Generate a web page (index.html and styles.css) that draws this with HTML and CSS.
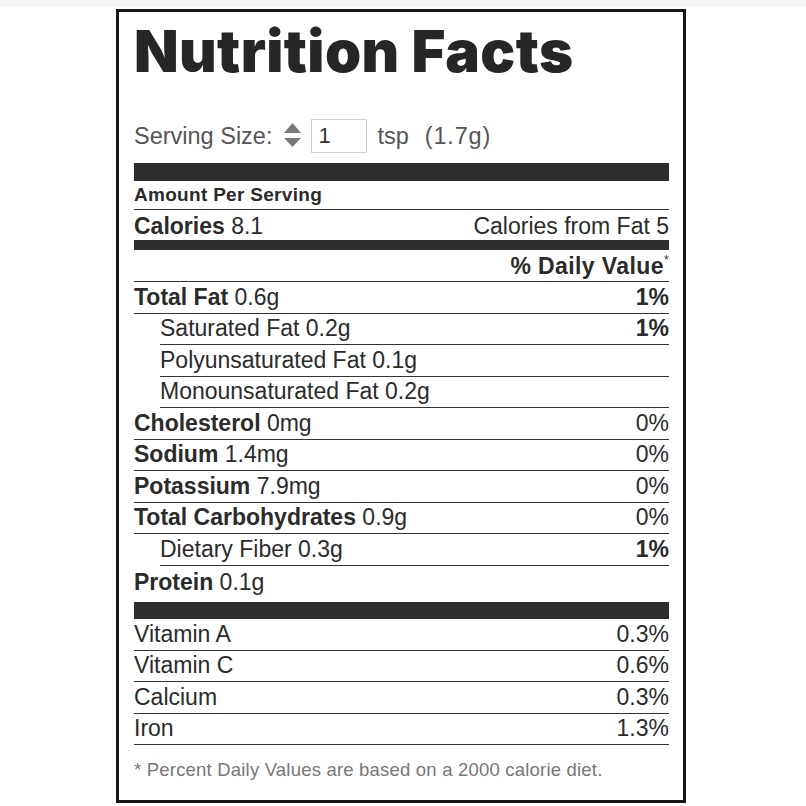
FILE: index.html
```html
<!DOCTYPE html>
<html>
<head>
<meta charset="utf-8">
<link rel="stylesheet" href="styles.css">
</head>
<body>
<div class="topstrip"></div>
<div class="label">
  <h1 class="title">Nutrition Facts</h1>
  <div class="serving">
    <span class="serving-label">Serving Size:</span>
    <svg class="spinner" width="17" height="26" viewBox="0 0 17 26"><polygon points="8.5,0 17,10 0,10" fill="#7a7a7a"/><polygon points="0,15 17,15 8.5,24" fill="#7a7a7a"/></svg>
    <span class="qty">1</span>
    <span class="unit">tsp</span>
    <span class="grams">(1.7g)</span>
  </div>
  <div class="bar bar-thick"></div>
  <div class="row amount"><b>Amount Per Serving</b></div>
  <div class="row cal"><span><b>Calories</b> 8.1</span><span>Calories from Fat 5</span></div>
  <div class="bar bar-mid"></div>
  <div class="row dv"><span></span><b>% Daily Value<sup>*</sup></b></div>
  <div class="row"><span><b>Total Fat</b> 0.6g</span><b>1%</b></div>
  <div class="row sub"><span>Saturated Fat 0.2g</span><b>1%</b></div>
  <div class="row sub"><span>Polyunsaturated Fat 0.1g</span></div>
  <div class="row sub"><span>Monounsaturated Fat 0.2g</span></div>
  <div class="row"><span><b>Cholesterol</b> 0mg</span><span>0%</span></div>
  <div class="row"><span><b>Sodium</b> 1.4mg</span><span>0%</span></div>
  <div class="row"><span><b>Potassium</b> 7.9mg</span><span>0%</span></div>
  <div class="row"><span><b>Total Carbohydrates</b> 0.9g</span><span>0%</span></div>
  <div class="row sub"><span>Dietary Fiber 0.3g</span><b>1%</b></div>
  <div class="row last"><span><b>Protein</b> 0.1g</span></div>
  <div class="bar bar-vit"></div>
  <div class="row"><span>Vitamin A</span><span>0.3%</span></div>
  <div class="row"><span>Vitamin C</span><span>0.6%</span></div>
  <div class="row"><span>Calcium</span><span>0.3%</span></div>
  <div class="row"><span>Iron</span><span>1.3%</span></div>
  <p class="foot">* Percent Daily Values are based on a 2000 calorie diet.</p>
</div>
</body>
</html>
```
FILE: styles.css
```css
html, body {
  margin: 0;
  padding: 0;
  background: #fff;
}
body {
  font-family: "Liberation Sans", Arial, sans-serif;
  color: #2b2b2b;
}
.topstrip {
  height: 7px;
  background: #f7f7f7;
}
.label {
  box-sizing: border-box;
  margin: 2px 0 0 116px;
  width: 570px;
  height: 794px;
  border: 3px solid #161616;
  padding: 0 14px 0 15px;
  display: flex;
  flex-direction: column;
}
.title {
  margin: 0;
  height: 92px;
  font-family: Inter, "Liberation Sans", sans-serif;
  font-weight: 900;
  font-size: 58px;
  line-height: 78px;
  letter-spacing: 0.4px;
  color: #262626;
}
.serving {
  margin-top: 15px;
  height: 34px;
  display: flex;
  align-items: center;
  font-size: 23.5px;
  color: #555;
}
.serving-label {
  margin-right: 12px;
}
.spinner {
  margin-right: 10px;
}
.qty {
  box-sizing: border-box;
  width: 56px;
  height: 34px;
  border: 1px solid #cfcfcf;
  padding: 3px 0 0 6px;
  font-size: 22px;
  color: #333;
  margin-right: 10px;
}
.unit {
  margin-right: 16px;
}
.grams {
  letter-spacing: 0.8px;
}
.bar {
  background: #2e2e2e;
}
.bar-thick {
  height: 18px;
  margin-top: 10px;
}
.bar-mid {
  height: 10px;
}
.bar-vit {
  height: 17px;
}
.row {
  box-sizing: border-box;
  height: 31.5px;
  flex-shrink: 0;
  border-bottom: 1px solid #333;
  display: flex;
  justify-content: space-between;
  align-items: center;
  font-size: 23px;
  color: #2b2b2b;
}
.row b {
  font-weight: bold;
}
.amount {
  height: 29px;
  font-size: 19px;
  letter-spacing: 0.3px;
  align-items: flex-end;
  padding-bottom: 3px;
}
.cal {
  height: 30px;
  border-bottom: none;
  padding-top: 2px;
}
.dv {
  height: 32px;
  padding-top: 2px;
}
.dv b {
  letter-spacing: 0.4px;
}
.dv sup {
  font-size: 12px;
  font-weight: normal;
  vertical-align: 10px;
  line-height: 0;
}
.sub {
  margin-left: 26px;
}
.last {
  border-bottom: none;
  height: 36.5px;
  align-items: flex-start;
  padding-top: 3px;
}
.foot {
  margin: 14px 0 0 0;
  font-size: 18.5px;
  letter-spacing: 0.2px;
  color: #777;
}
```
